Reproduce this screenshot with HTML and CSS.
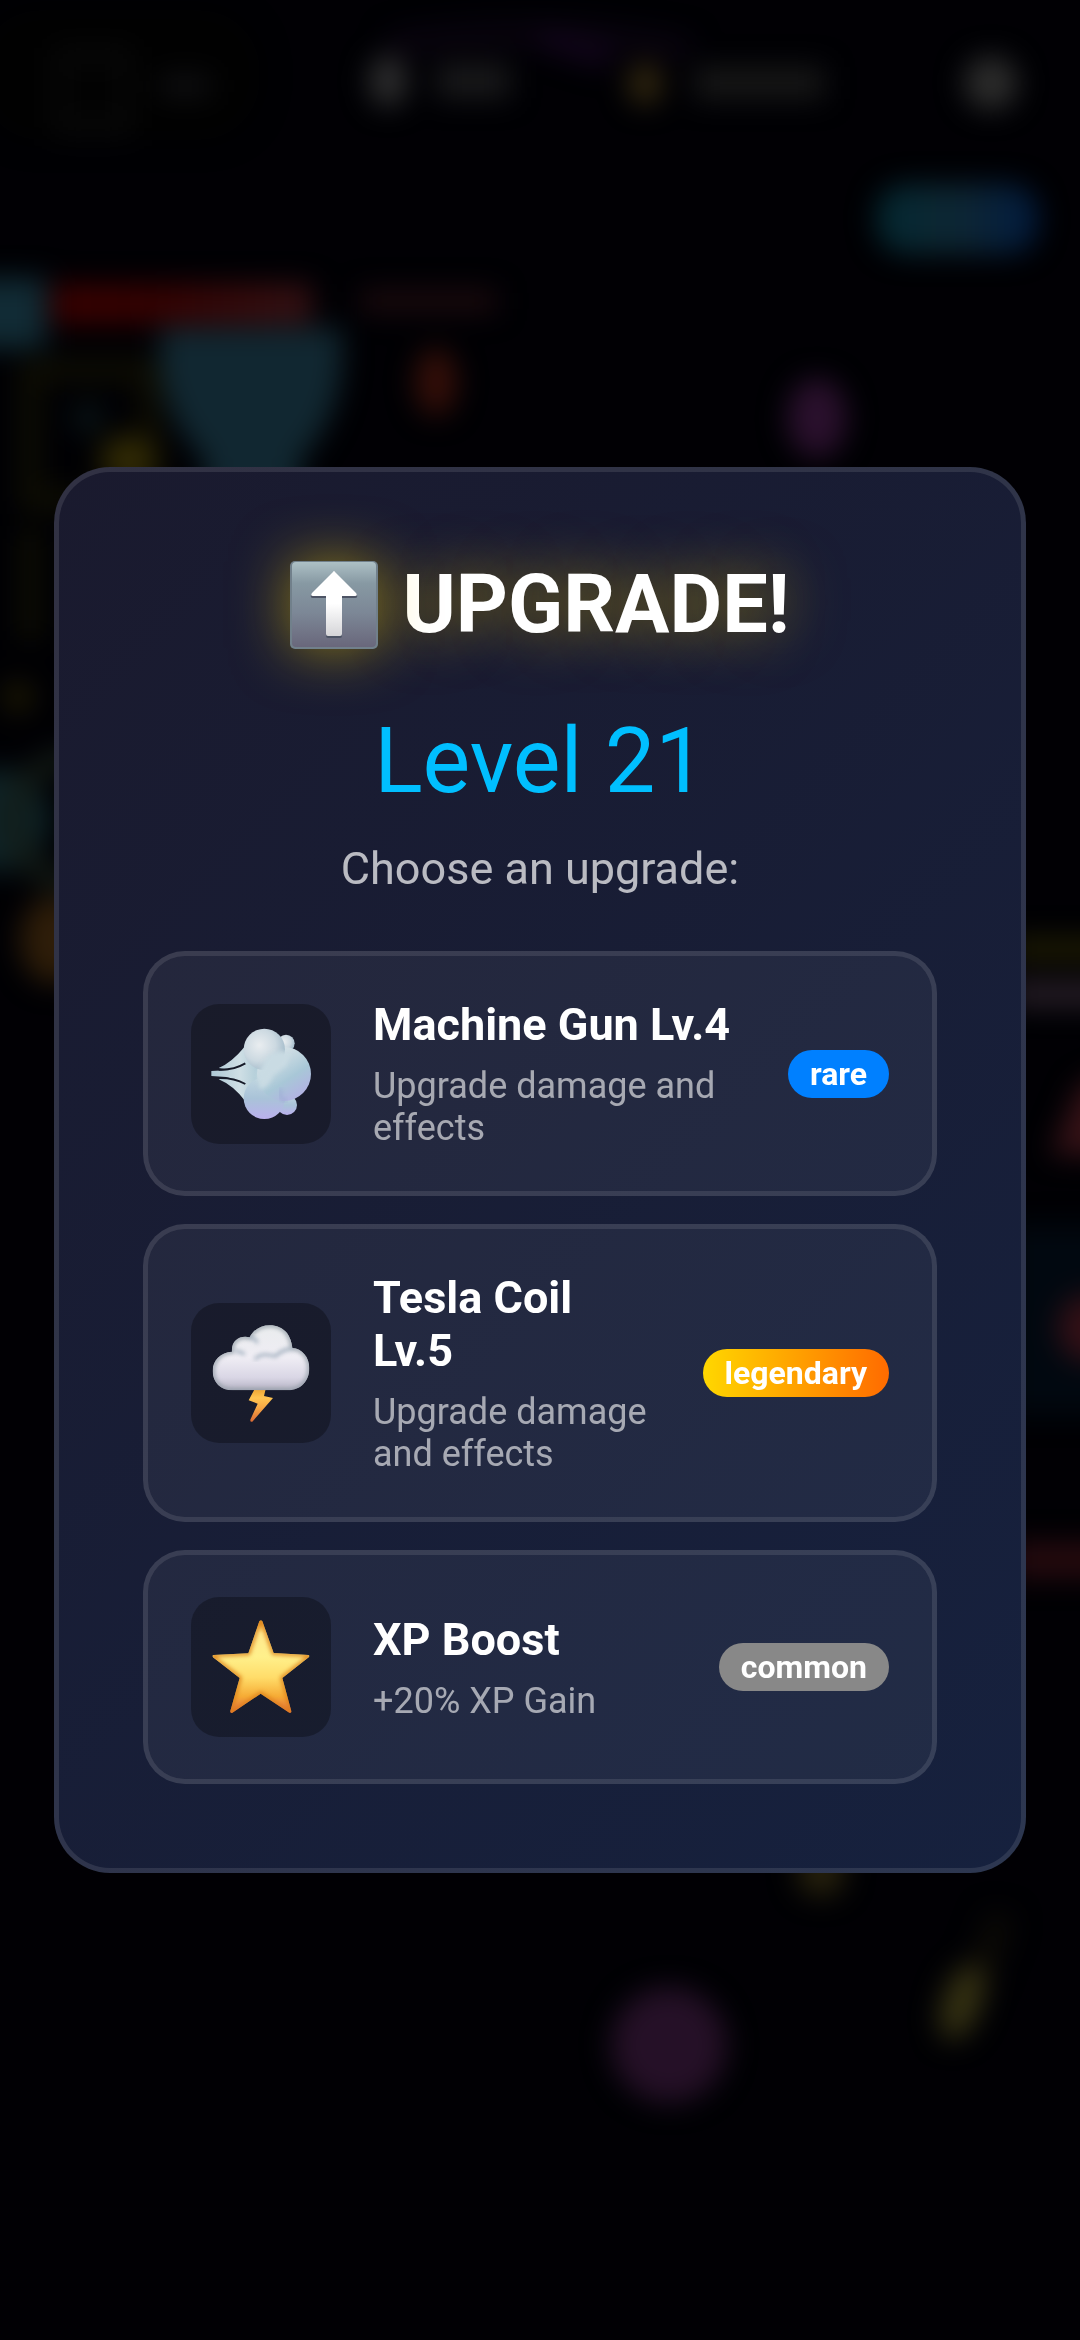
FILE: index.html
```html
<!DOCTYPE html>
<html lang="en">
<head>
<meta charset="utf-8">
<meta name="viewport" content="width=device-width, initial-scale=1">
<title>Upgrade</title>
<link rel="stylesheet" href="styles.css">
</head>
<body>
<!-- Paused game scene behind the dialog -->
<svg class="scene" viewBox="0 0 1080 2340" preserveAspectRatio="xMidYMid slice" aria-hidden="true">
  <defs>
    <filter id="soft" x="-60" y="-60" width="1200" height="2460" filterUnits="userSpaceOnUse" color-interpolation-filters="sRGB"><feGaussianBlur stdDeviation="14"/></filter>
    <linearGradient id="pill"><stop offset="0" stop-color="#032831"/><stop offset=".5" stop-color="#0e2633"/><stop offset="1" stop-color="#011b40"/></linearGradient>
    <linearGradient id="hp"><stop offset="0" stop-color="#3a0000"/><stop offset=".4" stop-color="#360202"/><stop offset="1" stop-color="#341114"/></linearGradient>
  </defs>
  <g filter="url(#soft)">
    <rect x="-20" y="10" width="280" height="130" rx="60" fill="#010101"/>
    <rect x="62" y="55" width="62" height="72" fill="none" stroke="#0a0a0a" stroke-width="14"/>
    <rect x="160" y="76" width="50" height="20" fill="#111113"/>
    <path d="M390 45Q540 20 690 50" fill="none" stroke="#0a0410" stroke-width="22"/>
    <path d="M540 38l70 22" stroke="#14051e" stroke-width="18"/>
    <ellipse cx="388" cy="81" rx="19" ry="26" fill="#2e2e2f"/>
    <rect x="436" y="64" width="74" height="34" fill="#19191b"/>
    <ellipse cx="645" cy="84" rx="17" ry="21" fill="#332810"/>
    <rect x="694" y="67" width="130" height="32" fill="#171717"/>
    <circle cx="991" cy="83" r="27" fill="#2c2c2c"/>
    <rect x="876" y="184" width="162" height="70" rx="30" fill="url(#pill)"/>
    <rect x="-60" y="278" width="106" height="70" fill="#112b35"/>
    <rect x="52" y="284" width="260" height="40" fill="url(#hp)"/>
    <rect x="360" y="290" width="136" height="22" fill="#1c0a0e"/>
    <path d="M160 328H342V365Q338 420 300 460V500H205V460Q165 420 160 365Z" fill="#112731"/>
    <ellipse cx="436" cy="382" rx="21" ry="34" fill="#350f09"/>
    <ellipse cx="817" cy="418" rx="30" ry="40" fill="#2a102d"/>
    <path d="M30 370H150V500H30ZM30 530V640" fill="none" stroke="#100f03" stroke-width="20"/>
    <circle cx="88" cy="418" r="16" fill="#0a1416"/>
    <ellipse cx="128" cy="460" rx="28" ry="25" fill="#312a04"/>
    <circle cx="18" cy="697" r="16" fill="#1c1803"/>
    <circle cx="-2" cy="820" r="52" fill="#0e2327"/>
    <circle cx="75" cy="820" r="62" fill="none" stroke="#131b16" stroke-width="20"/>
    <ellipse cx="54" cy="940" rx="34" ry="44" fill="#2e1d09"/>
    <rect x="1010" y="938" width="130" height="22" fill="#201d03"/>
    <rect x="1010" y="982" width="130" height="24" fill="#2a202a"/>
    <path d="M1140 1060L1080 1085L1050 1155H1140Z" fill="#361217"/>
    <rect x="1010" y="1225" width="130" height="190" fill="#010810"/>
    <ellipse cx="1088" cy="1328" rx="30" ry="34" fill="#331016"/>
    <rect x="1010" y="1542" width="130" height="36" fill="#260a0f"/>
    <ellipse cx="821" cy="1872" rx="24" ry="24" fill="#28220d"/>
    <path d="M1002 1915L975 1985" stroke="#0c0a06" stroke-width="26"/>
    <ellipse cx="962" cy="2002" rx="19" ry="40" fill="#363213" transform="rotate(20 962 2002)"/>
    <circle cx="669" cy="2045" r="58" fill="#251027"/>
  </g>
</svg>

<main class="overlay">
  <section class="dialog" role="dialog" aria-labelledby="dialog-title">
    <h1 class="title" id="dialog-title">
      <svg class="title-icon" viewBox="0 0 88 88" aria-hidden="true">
        <defs>
          <linearGradient id="key" x2="0" y2="1"><stop offset="0" stop-color="#adc0c5"/><stop offset=".25" stop-color="#8799a3"/><stop offset=".6" stop-color="#7c8796"/><stop offset="1" stop-color="#69677b"/></linearGradient>
          <linearGradient id="arrow" x2="0" y2="1"><stop offset=".5" stop-color="#fff"/><stop offset="1" stop-color="#d5d5d8"/></linearGradient>
        </defs>
        <rect width="88" height="88" rx="5" fill="#71808b"/>
        <rect x="2" y="1" width="84" height="85" rx="4" fill="url(#key)"/>
        <path d="M44 12L67 34Q68 37 65 37H52V75Q52 77 50 77H38Q36 77 36 75V37H23Q20 37 21 34Z" fill="#4d5465"/>
        <path d="M43 11Q44 9 45 11L66 32Q68 35 65 35H52V73Q52 75 50 75H38Q36 75 36 73V35H23Q20 35 22 32Z" fill="url(#arrow)"/>
      </svg>
      <span>UPGRADE!</span>
    </h1>
    <p class="level">Level 21</p>
    <p class="prompt">Choose an upgrade:</p>

    <div class="options">
      <button class="card" type="button">
        <svg class="card-icon" viewBox="33 36 420 420" aria-hidden="true">
          <defs>
            <radialGradient id="puffA" cx=".38" cy=".4" r=".65"><stop offset="0" stop-color="#e9edf0"/><stop offset=".6" stop-color="#ccd9e1"/><stop offset="1" stop-color="#a5bccb"/></radialGradient>
            <linearGradient id="puffB" x1=".15" y1=".1" x2=".75" y2="1"><stop offset="0" stop-color="#dfe7eb"/><stop offset=".35" stop-color="#c0d5df"/><stop offset=".6" stop-color="#a8c7d7"/><stop offset="1" stop-color="#b3b0e4"/></linearGradient>
            <linearGradient id="puffC" x2="0" y2="1"><stop offset="0" stop-color="#c0d6e0"/><stop offset=".5" stop-color="#a9c3d8"/><stop offset="1" stop-color="#bab0ed"/></linearGradient>
            <linearGradient id="jet" x2="1" y2="0"><stop offset="0" stop-color="#adc8d5"/><stop offset=".6" stop-color="#cfdfe5"/><stop offset="1" stop-color="#b1cdd8"/></linearGradient>
            <filter id="blend" x="-10%" y="-10%" width="120%" height="120%" color-interpolation-filters="sRGB"><feGaussianBlur stdDeviation="6"/></filter>
          </defs>
          <circle cx="318" cy="154" r="26" fill="url(#puffA)"/>
          <circle cx="321" cy="339" r="30" fill="url(#puffC)"/>
          <path d="M116 228Q155 212 196 162L235 230V270L196 328Q160 280 116 262L150 256L94 252V237L150 234Z" fill="url(#jet)"/>
          <path d="M116 233Q160 235 196 214M116 258Q162 257 196 276" fill="none" stroke="#161a28" stroke-width="6"/>
          <circle cx="253" cy="319" r="62" fill="url(#puffC)"/>
          <circle cx="312" cy="246" r="81" fill="url(#puffB)"/>
          <circle cx="253" cy="172" r="62" fill="url(#puffA)"/>
          <path d="M260 195Q300 165 330 185L320 220L280 250Q265 290 240 290L232 250Z" fill="#c9dbe3" filter="url(#blend)"/>
          <path d="M300 290L302 318L320 328" fill="none" stroke="#9aa6d3" stroke-width="6" filter="url(#blend)"/>
        </svg>
        <span class="info">
          <span class="name">Machine Gun Lv.4</span>
          <span class="desc">Upgrade damage and effects</span>
        </span>
        <span class="badge rare">rare</span>
      </button>

      <button class="card" type="button">
        <svg class="card-icon" viewBox="33 36 420 420" aria-hidden="true">
          <defs>
            <linearGradient id="cloud" x2="0" y2="1"><stop offset="0" stop-color="#e9eced"/><stop offset=".5" stop-color="#efedf4"/><stop offset=".8" stop-color="#d9d6e5"/><stop offset="1" stop-color="#b3b1c1"/></linearGradient>
            <linearGradient id="bolt" x2="0" y2="1"><stop offset="0" stop-color="#eba02e"/><stop offset=".3" stop-color="#ffc551"/><stop offset=".6" stop-color="#f6a644"/><stop offset="1" stop-color="#d96935"/></linearGradient>
            <clipPath id="cloudShape"><path d="M156 182C153 148 180 132 209 139C230 94 294 92 321 126Q334 144 337 171C366 173 388 198 388 232C388 270 362 298 324 298H158C122 298 98 274 98 240C98 207 123 184 156 182Z"/></clipPath>
          </defs>
          <path d="M226 290H258L252 315L279 321L217 392Q210 394 211 386L233 338L206 328Z" fill="url(#bolt)"/>
          <g clip-path="url(#cloudShape)">
            <rect x="95" y="100" width="296" height="200" fill="url(#cloud)"/>
            <path d="M156 182C153 148 180 132 209 139C230 94 294 92 321 126Q334 144 337 171C366 173 388 198 388 232C388 270 362 298 324 298H158C122 298 98 274 98 240C98 207 123 184 156 182Z" fill="none" stroke="#8c98a2" stroke-width="10" filter="url(#blend)"/>
            <path d="M225 205Q242 183 286 196Q305 176 337 172M165 180Q180 180 194 190M209 140Q226 140 232 156" fill="none" stroke="#98a8b8" stroke-width="8" filter="url(#blend)"/>
          </g>
        </svg>
        <span class="info">
          <span class="name">Tesla Coil Lv.5</span>
          <span class="desc">Upgrade damage and effects</span>
        </span>
        <span class="badge legendary">legendary</span>
      </button>

      <button class="card" type="button">
        <svg class="card-icon" viewBox="33 36 420 420" aria-hidden="true">
          <defs>
            <linearGradient id="star" x2="0" y2="1"><stop offset="0" stop-color="#f3a62a"/><stop offset=".15" stop-color="#ffe98e"/><stop offset=".4" stop-color="#fff08b"/><stop offset=".62" stop-color="#ffdc69"/><stop offset=".82" stop-color="#f6ab35"/><stop offset="1" stop-color="#e46744"/></linearGradient>
            <clipPath id="starShape"><path d="M238 109Q243 103 247 109L281 204L385 210Q391 212 386 217L307 279L334 379Q334 385 328 383L242 326L156 384Q150 385 151 378L179 279L99 217Q95 211 101 210L205 205Z"/></clipPath>
          </defs>
          <g clip-path="url(#starShape)">
            <rect x="94" y="102" width="298" height="284" fill="url(#star)"/>
            <path d="M238 109Q243 103 247 109L281 204L385 210Q391 212 386 217L307 279L334 379Q334 385 328 383L242 326L156 384Q150 385 151 378L179 279L99 217Q95 211 101 210L205 205Z" fill="none" stroke="#dc7f18" stroke-width="11" filter="url(#blend)"/>
          </g>
        </svg>
        <span class="info">
          <span class="name">XP Boost</span>
          <span class="desc">+20% XP Gain</span>
        </span>
        <span class="badge common">common</span>
      </button>
    </div>
  </section>
</main>
</body>
</html>
```

FILE: styles.css
```css
* {
  box-sizing: border-box;
}

body {
  margin: 0;
  background: #010004;
  color: #fff;
  font-family: Roboto, "Liberation Sans", sans-serif;
}

.scene {
  position: fixed;
  inset: 0;
  width: 100%;
  height: 100%;
}

.overlay {
  position: relative;
  display: flex;
  align-items: center;
  justify-content: center;
  min-height: 100vh;
}

.dialog {
  width: 90%;
  padding: 84px;
  border: 5px solid rgba(255, 255, 255, 0.1);
  border-radius: 56px;
  background: linear-gradient(135deg, #1a1a2e, #16213e);
  background-origin: border-box;
  text-align: center;
}

.title {
  display: flex;
  align-items: center;
  justify-content: center;
  gap: 24px;
  margin: 0 0 56px;
  font-size: 81px;
  line-height: 98px;
  font-weight: 700;
  text-shadow: 0 0 56px rgba(255, 215, 0, 0.5);
}

.title-icon {
  width: 88px;
  height: 88px;
  overflow: visible;
  filter: drop-shadow(0 0 28px rgba(255, 215, 0, 0.5));
}

.level {
  margin: 0 0 28px;
  color: #00bfff;
  font-size: 90px;
  line-height: 104px;
}

.prompt {
  margin: 0 0 56px;
  color: rgba(255, 255, 255, 0.7);
  font-size: 45px;
  line-height: 53px;
}

.options {
  display: flex;
  flex-direction: column;
  gap: 28px;
}

.card {
  display: flex;
  align-items: center;
  gap: 42px;
  width: 100%;
  padding: 42px 43px;
  border: 5px solid rgba(255, 255, 255, 0.1);
  border-radius: 42px;
  background: rgba(255, 255, 255, 0.05);
  color: inherit;
  font-family: inherit;
  text-align: left;
  cursor: pointer;
}

.card-icon {
  flex: none;
  width: 140px;
  height: 140px;
  border-radius: 28px;
  background: rgba(0, 0, 0, 0.3);
}

.info {
  flex: 1;
  display: flex;
  flex-direction: column;
  gap: 14px;
}

.name {
  font-size: 45px;
  line-height: 53px;
  font-weight: 700;
}

.desc {
  color: rgba(255, 255, 255, 0.6);
  font-size: 36px;
  line-height: 42px;
}

.badge {
  flex: none;
  padding: 6px 22px;
  border-radius: 28px;
  font-size: 32px;
  line-height: 36px;
  font-weight: 700;
}

.rare {
  background: #0080ff;
}

.legendary {
  background: linear-gradient(90deg, #ffd700, #ff6b00);
}

.common {
  background: #888;
}
```
